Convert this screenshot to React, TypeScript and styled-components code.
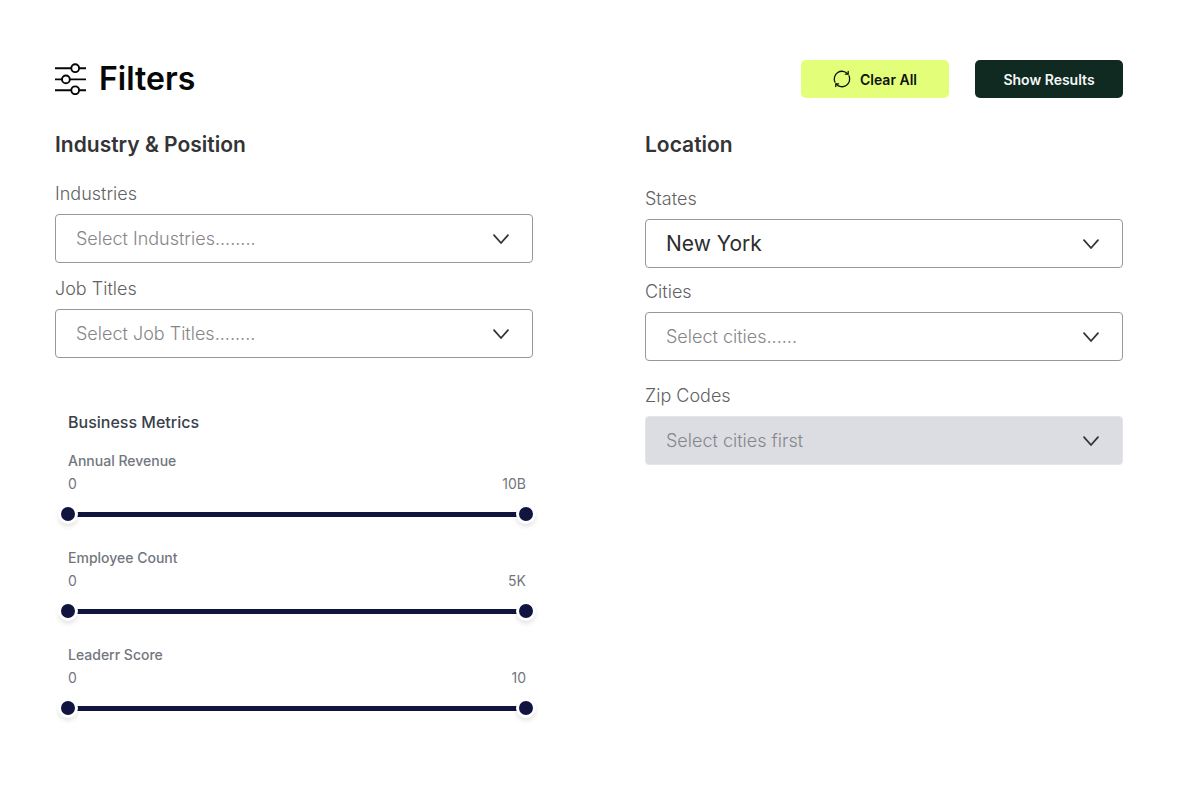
import React, { useId, useState } from "react";
import styled, { createGlobalStyle } from "styled-components";

const GlobalStyle = createGlobalStyle`
  *, *::before, *::after { box-sizing: border-box; }
  body {
    margin: 0;
    background: #ffffff;
    font-family: Inter, "Liberation Sans", sans-serif;
  }
  h1, h2, h3 { margin: 0; }
`;

const Page = styled.main`
  padding: 60px 77px 60px 55px;
`;

const Header = styled.header`
  display: flex;
  align-items: flex-start;
  justify-content: space-between;
`;

const Title = styled.h1`
  display: flex;
  align-items: center;
  gap: 12px;
  font-size: 32px;
  line-height: 37px;
  font-weight: 600;
  color: #050807;
`;

const Actions = styled.div`
  display: flex;
  gap: 26px;
`;

const Button = styled.button<{ $primary?: boolean }>`
  display: flex;
  align-items: center;
  justify-content: center;
  gap: 9px;
  width: 148px;
  height: 38px;
  padding: 0;
  border: 0;
  border-radius: 5px;
  font-family: inherit;
  font-size: 14px;
  font-weight: 600;
  color: ${(p) => (p.$primary ? "#f4f7f5" : "#0c130a")};
  background: ${(p) => (p.$primary ? "#112a21" : "#e3ff7a")};
  cursor: pointer;
`;

const Columns = styled.div`
  display: grid;
  grid-template-columns: 1fr 1fr;
  gap: 112px;
  margin-top: 33px;
`;

const SectionTitle = styled.h2`
  font-size: 21px;
  line-height: 28px;
  font-weight: 600;
  color: #343436;
`;

const FieldList = styled.div<{ $top: number }>`
  display: flex;
  flex-direction: column;
  margin-top: ${(p) => p.$top}px;
`;

const Field = styled.div<{ $gap?: number }>`
  display: flex;
  flex-direction: column;
  gap: 8px;
  margin-top: ${(p) => p.$gap ?? 0}px;
`;

const Label = styled.label`
  font-size: 18px;
  line-height: 24px;
  font-weight: 350;
  color: #626264;
`;

const SelectBox = styled.div`
  display: grid;
  align-items: center;
  > * { grid-area: 1 / 1; }
  > svg {
    justify-self: end;
    margin-right: 23px;
    pointer-events: none;
  }
`;

const Select = styled.select<{ $filled: boolean }>`
  appearance: none;
  width: 100%;
  height: 49px;
  padding: 0 56px 0 20px;
  border: 1px solid #98989b;
  border-radius: 4px;
  background: #ffffff;
  font-family: inherit;
  font-size: ${(p) => (p.$filled ? 21 : 18)}px;
  font-weight: ${(p) => (p.$filled ? 400 : 350)};
  color: ${(p) => (p.$filled ? "#2c2e2e" : "#868689")};
  opacity: 1;
  &:disabled {
    background: #dcdde2;
    border-color: #e4e5e9;
    color: #868689;
    opacity: 1;
  }
`;

const Metrics = styled.section`
  margin-top: 54px;
  padding: 0 7px 0 13px;
`;

const MetricsTitle = styled.h3`
  margin-bottom: 19px;
  font-size: 16px;
  line-height: 20px;
  font-weight: 500;
  color: #3a3f4b;
`;

const Metric = styled.fieldset`
  margin: 0 0 24px;
  padding: 0;
  border: 0;
  min-width: 0;
`;

const MetricName = styled.legend`
  padding: 0;
  font-size: 14px;
  line-height: 20px;
  font-weight: 500;
  color: #72767e;
`;

const Bounds = styled.div`
  display: flex;
  justify-content: space-between;
  margin-top: 3px;
  font-size: 14px;
  line-height: 20px;
  color: #72767e;
`;

const Slider = styled.div`
  display: grid;
  align-items: center;
  height: 20px;
  margin: 10px -10px 0;
  > * { grid-area: 1 / 1; }
`;

const Rail = styled.div`
  height: 5px;
  margin: 0 10px;
  background: #10143f;
`;

const Range = styled.input`
  appearance: none;
  width: 100%;
  height: 20px;
  margin: 0;
  background: transparent;
  pointer-events: none;
  &::-webkit-slider-thumb {
    appearance: none;
    width: 20px;
    height: 20px;
    border: 3px solid #ffffff;
    border-radius: 50%;
    background: #10143f;
    box-shadow: 0 3px 4px rgba(0, 0, 0, 0.1);
    pointer-events: auto;
    cursor: pointer;
  }
`;

const SlidersIcon = () => (
  <svg width="32" height="32" viewBox="0 0 32 32" fill="none" stroke="#050807" strokeWidth="1.9" aria-hidden="true">
    <path d="M0 5.2H16.2M24.2 5.2H31M0 16.4H7M14.8 16.4H31M0 27.3H16.2M24.2 27.3H31" />
    <circle cx="20.2" cy="5.2" r="3.9" />
    <circle cx="10.9" cy="16.4" r="3.9" />
    <circle cx="20.2" cy="27.3" r="3.9" />
  </svg>
);

const RefreshIcon = () => (
  <svg width="18" height="18" viewBox="0 0 18 18" fill="none" stroke="#0c130a" strokeWidth="1.3" strokeLinecap="round" strokeLinejoin="round" aria-hidden="true">
    <path d="M2 12.2A7.7 7.7 0 0 1 14.8 3.9M16 5.8A7.7 7.7 0 0 1 3.2 14.1" />
    <path d="M15.2 1.4V4.2H12.4M2.8 16.6V13.8H5.6" />
  </svg>
);

const ChevronIcon = () => (
  <svg width="18" height="12" viewBox="0 0 18 12" fill="none" stroke="#343436" strokeWidth="1.8" strokeLinecap="round" strokeLinejoin="round" aria-hidden="true">
    <path d="M2 2.2 9 10 16 2.2" />
  </svg>
);

type SelectFieldProps = {
  label: string;
  placeholder: string;
  options?: string[];
  initial?: string;
  disabled?: boolean;
  gap?: number;
};

function SelectField({ label, placeholder, options = [], initial = "", disabled, gap }: SelectFieldProps) {
  const id = useId();
  const [value, setValue] = useState(initial);
  return (
    <Field $gap={gap}>
      <Label htmlFor={id}>{label}</Label>
      <SelectBox>
        <Select id={id} value={value} $filled={value !== ""} disabled={disabled} onChange={(e) => setValue(e.target.value)}>
          {placeholder && <option value="">{placeholder}</option>}
          {options.map((o) => (
            <option key={o} value={o}>{o}</option>
          ))}
        </Select>
        <ChevronIcon />
      </SelectBox>
    </Field>
  );
}

function RangeField({ name, max, maxLabel }: { name: string; max: number; maxLabel: string }) {
  const [low, setLow] = useState(0);
  const [high, setHigh] = useState(max);
  return (
    <Metric>
      <MetricName>{name}</MetricName>
      <Bounds>
        <span>0</span>
        <span>{maxLabel}</span>
      </Bounds>
      <Slider>
        <Rail />
        <Range type="range" min={0} max={max} value={low} aria-label={`${name} minimum`} onChange={(e) => setLow(Math.min(Number(e.target.value), high))} />
        <Range type="range" min={0} max={max} value={high} aria-label={`${name} maximum`} onChange={(e) => setHigh(Math.max(Number(e.target.value), low))} />
      </Slider>
    </Metric>
  );
}

export default function App() {
  return (
    <>
      <GlobalStyle />
      <Page>
        <Header>
          <Title>
            <SlidersIcon />
            Filters
          </Title>
          <Actions>
            <Button type="button">
              <RefreshIcon />
              Clear All
            </Button>
            <Button type="button" $primary>Show Results</Button>
          </Actions>
        </Header>
        <Columns>
          <section>
            <SectionTitle>Industry &amp; Position</SectionTitle>
            <FieldList $top={23}>
              <SelectField label="Industries" placeholder="Select Industries........" />
              <SelectField label="Job Titles" placeholder="Select Job Titles........" gap={14} />
            </FieldList>
            <Metrics>
              <MetricsTitle>Business Metrics</MetricsTitle>
              <RangeField name="Annual Revenue" max={10000} maxLabel="10B" />
              <RangeField name="Employee Count" max={5000} maxLabel="5K" />
              <RangeField name="Leaderr Score" max={10} maxLabel="10" />
            </Metrics>
          </section>
          <section>
            <SectionTitle>Location</SectionTitle>
            <FieldList $top={28}>
              <SelectField label="States" placeholder="" options={["New York"]} initial="New York" />
              <SelectField label="Cities" placeholder="Select cities......" gap={12} />
              <SelectField label="Zip Codes" placeholder="Select cities first" disabled gap={23} />
            </FieldList>
          </section>
        </Columns>
      </Page>
    </>
  );
}
